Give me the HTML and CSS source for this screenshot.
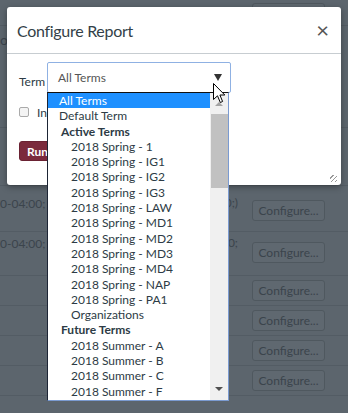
FILE: index.html
```html
<!DOCTYPE html>
<html>
<head>
  <title>Configure Report</title>
  <link rel="stylesheet" href="styles.css">
</head>
<body>

  <div class="page">
    <div class="row row-top">
      <button class="configure">Configure...</button>
    </div>
    <div class="row row-tall">
      <div class="cell">o</div>
    </div>
    <div class="row row-mid"></div>
    <div class="row row-a">
      <div class="cell">0-04:00; E</div>
      <div class="side">
        <span class="note">0;)</span>
        <button class="configure">Configure...</button>
      </div>
    </div>
    <div class="row row-b">
      <div class="cell">0-04:00; E</div>
      <div class="side">
        <span class="note">0;</span>
        <button class="configure">Configure...</button>
      </div>
    </div>
    <div class="row row-s"><div class="cell"></div><div class="side"><button class="configure">Configure...</button></div></div>
    <div class="row row-s"><div class="cell"></div><div class="side"><button class="configure">Configure...</button></div></div>
    <div class="row row-s"><div class="cell"></div><div class="side"><button class="configure">Configure...</button></div></div>
    <div class="row row-s"><div class="cell"></div><div class="side"><button class="configure">Configure...</button></div></div>
  </div>

  <div class="modal">
    <div class="modal-header">
      <h1>Configure Report</h1>
      <span class="close">&times;</span>
    </div>
    <div class="modal-body">
      <div class="field">
        <label>Term</label>
        <div class="select">
          <span>All Terms</span>
          <span class="arrow"></span>
        </div>
      </div>
      <div class="check">
        <span class="box"></span>
        <span>Include deleted objects</span>
      </div>
      <button class="run">Run Report</button>
    </div>
    <span class="grip"></span>
  </div>

  <div class="dropdown">
    <div class="options">
      <div class="opt top selected">All Terms</div>
      <div class="opt top">Default Term</div>
      <div class="group">Active Terms</div>
      <div class="opt">2018 Spring - 1</div>
      <div class="opt">2018 Spring - IG1</div>
      <div class="opt">2018 Spring - IG2</div>
      <div class="opt">2018 Spring - IG3</div>
      <div class="opt">2018 Spring - LAW</div>
      <div class="opt">2018 Spring - MD1</div>
      <div class="opt">2018 Spring - MD2</div>
      <div class="opt">2018 Spring - MD3</div>
      <div class="opt">2018 Spring - MD4</div>
      <div class="opt">2018 Spring - NAP</div>
      <div class="opt">2018 Spring - PA1</div>
      <div class="opt">Organizations</div>
      <div class="group">Future Terms</div>
      <div class="opt">2018 Summer - A</div>
      <div class="opt">2018 Summer - B</div>
      <div class="opt">2018 Summer - C</div>
      <div class="opt">2018 Summer - F</div>
    </div>
    <div class="scrollbar">
      <span class="up"></span>
      <span class="thumb"></span>
      <span class="down"></span>
    </div>
  </div>

  <svg class="cursor" width="13" height="21" viewBox="0 0 13 21">
    <path d="M0.5 0.5 L0.5 16.5 L4.5 12.8 L7.3 19.5 L9.6 18.5 L6.9 12 L11.8 12 Z" fill="#fff" stroke="#000" stroke-width="1"/>
  </svg>

</body>
</html>
```

FILE: styles.css
```css
body {
  margin: 0;
  padding: 0;
  width: 348px;
  height: 413px;
  overflow: hidden;
  position: relative;
  background-color: #5c656d;
  font-family: Lato, 'Open Sans', sans-serif;
  color: #2d3b45;
}

/* Dimmed page behind the dialog */
.page {
  display: flex;
  flex-direction: column;
}

.row {
  display: flex;
  justify-content: space-between;
  align-items: flex-start;
  border-bottom: 1px solid #535c64;
  padding-right: 23px;
  font-size: 12px;
  color: #3b444c;
}

.row-top {
  height: 26px;
  justify-content: flex-end;
  padding-top: 3px;
  box-sizing: border-box;
}

.row-tall {
  height: 101px;
}

.row-tall .cell {
  margin-top: 5px;
  font-size: 14px;
}

.row-mid {
  height: 57px;
}

.row-a {
  height: 45px;
}

.row-b {
  height: 43px;
}

.row-s {
  height: 29px;
}

.cell {
  line-height: 18px;
}

.row-a .cell,
.row-a .note {
  margin-top: 9px;
}

.row-b .cell,
.row-b .note {
  margin-top: 3px;
}

.side {
  display: flex;
  align-items: flex-start;
  gap: 14px;
}

.configure {
  font-family: Lato, sans-serif;
  font-size: 12px;
  color: #3b444c;
  background-color: #5f6870;
  border: 1px solid #4f585f;
  border-radius: 3px;
  width: 73px;
  height: 21px;
  padding: 0;
}

.row-a .configure {
  margin-top: 14px;
}

.row-b .configure {
  margin-top: 10px;
}

.row-s .configure {
  margin-top: 4px;
}

/* Dialog */
.modal {
  position: absolute;
  top: 7px;
  left: 7px;
  width: 334px;
  height: 178px;
  background-color: white;
  border-radius: 3px;
  box-shadow: 0 2px 6px rgba(0, 0, 0, 0.35);
}

.modal-header {
  display: flex;
  justify-content: space-between;
  align-items: center;
  height: 46px;
  padding: 0 12px 0 10px;
  border-bottom: 1px solid #c7cdd1;
}

.modal-header h1 {
  margin: 0;
  font-size: 16px;
  letter-spacing: -0.3px;
  font-weight: 400;
  color: #333f48;
}

.close {
  font-size: 22px;
  color: #555;
  line-height: 1;
}

.modal-body {
  padding: 8px 12px;
}

.field {
  display: flex;
  align-items: center;
  font-size: 12px;
}

.field label {
  width: 28px;
  padding-top: 8px;
  color: #2d3b45;
}

.select {
  display: flex;
  justify-content: space-between;
  align-items: center;
  width: 164px;
  height: 29px;
  padding: 0 8px 0 10px;
  border: 1px solid #8fb1e3;
  border-radius: 2px;
  color: #555;
}

.arrow {
  width: 0;
  height: 0;
  border-left: 4px solid transparent;
  border-right: 4px solid transparent;
  border-top: 7px solid #333;
}

.check {
  display: flex;
  align-items: center;
  gap: 8px;
  height: 14px;
  margin-top: 12px;
  font-size: 12px;
}

.check .box {
  width: 8px;
  height: 8px;
  border: 1px solid #aaa;
  border-radius: 2px;
  background-color: #f4f4f4;
}

.run {
  margin-top: 22px;
  font-family: Lato, sans-serif;
  font-size: 12px;
  font-weight: 700;
  color: white;
  background-color: #7b2a3c;
  border: 1px solid #6a2233;
  border-radius: 3px;
  height: 20px;
  padding: 0 7px;
}

.grip {
  position: absolute;
  right: 4px;
  bottom: 3px;
  width: 7px;
  height: 7px;
  background: repeating-linear-gradient(
    135deg,
    transparent 0,
    transparent 2px,
    #999 2px,
    #999 3px
  );
}

/* Open select list */
.dropdown {
  position: absolute;
  top: 92px;
  left: 47px;
  width: 180px;
  height: 307px;
  display: flex;
  background-color: white;
  border: 1px solid #7b9bd1;
  border-top-color: #111;
  border-left-color: #1d2535;
  overflow: hidden;
}

.options {
  flex: 1;
  font-size: 12px;
  line-height: 15.3px;
  color: #2d3b45;
}

.opt {
  padding-left: 23px;
  white-space: nowrap;
}

.opt.top {
  padding-left: 11px;
}

.opt.selected {
  background-color: #1e90ff;
  color: white;
}

.group {
  padding-left: 13px;
  font-weight: 700;
}

.scrollbar {
  position: relative;
  width: 18px;
  background-color: #f0f0f0;
}

.scrollbar .up,
.scrollbar .down {
  position: absolute;
  left: 5px;
  width: 0;
  height: 0;
  border-left: 4px solid transparent;
  border-right: 4px solid transparent;
}

.scrollbar .up {
  top: 9px;
  border-bottom: 4px solid #a3a3a3;
}

.scrollbar .down {
  bottom: 9px;
  border-top: 4px solid #505050;
}

.scrollbar .thumb {
  position: absolute;
  top: 21px;
  left: 1px;
  width: 17px;
  height: 74px;
  background-color: #c1c1c1;
}

.cursor {
  position: absolute;
  left: 213px;
  top: 83px;
}
```
